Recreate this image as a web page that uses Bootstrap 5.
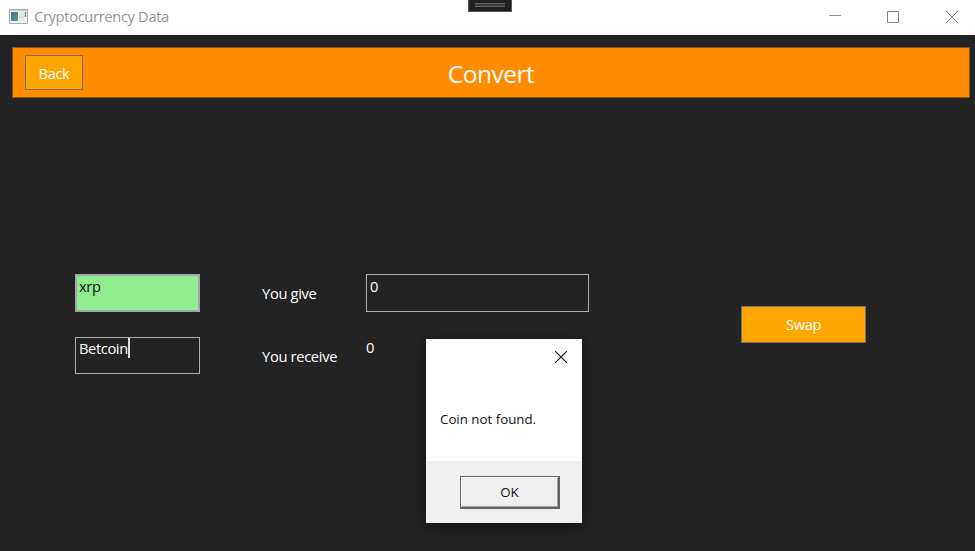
<!DOCTYPE html>
<html lang="en">
<head>
<meta charset="utf-8">
<meta name="viewport" content="width=device-width, initial-scale=1">
<title>Cryptocurrency Data</title>
<link href="https://cdn.jsdelivr.net/npm/bootstrap@5.3.0/dist/css/bootstrap.min.css" rel="stylesheet">
<style>
body { background: #232323; color: #fff; font-family: "Open Sans", "Noto Sans", sans-serif; font-size: 14.7px; line-height: 20px; letter-spacing: -.4px; height: 551px; }
.title-bar { height: 35px; padding: 0 16px 2px 9px; color: #949494; }
.title-text { margin-left: 5px; padding-bottom: 2px; font-size: 14.7px; letter-spacing: -.34px; }
.win-controls { gap: 46px; }
.debug-tab { top: 0; left: 468px; width: 44px; height: 12px; }
.main-area { padding: 12px 5px 0 12px; }
.app-header { height: 51px; background: #ff8c00; border: 1px solid #8b5312; }
.app-header .btn { left: 12px; top: 7px; width: 58px; height: 35px; }
.app-header h1 { font-size: 24.5px; letter-spacing: -.5px; }
.btn-amber, .btn-amber:hover { background: #ffa500; color: #fff; border: 1px solid #707070; }
.app-btn { font-size: inherit; line-height: 20px; letter-spacing: inherit; }
.form-area { padding: 176px 0 0 63px; }
.w-coin { width: 125px; }
.w-label { width: 104px; margin-left: 62px; letter-spacing: -.33px; }
.w-amount { width: 223px; }
.app-input { color: #fff; background: transparent; border: 1px solid #abadb3; padding: 1px 3px; line-height: 20px; }
.give-row { height: 38px; margin-bottom: 25px; }
.receive-row { height: 37px; }
.found { background: #90ee90; color: #111; border: 2px solid #a3a5a8; padding: 0 2px; }
.caret { width: 2px; height: 20px; background: #ddd; }
.swap-btn { width: 125px; height: 37px; margin: 32px 0 0 152px; padding: 0 0 2px; }
.message-box { left: 426px; top: 339px; width: 156px; height: 184px; color: #111; font-size: 13.3px; letter-spacing: 0; box-shadow: 0 3px 12px rgba(0,0,0,.5); }
.message-close { height: 36px; padding: 11px 15px 0 0; }
.message-body { padding: 34px 14px 0; }
.message-footer { height: 62px; background: #efefef; padding: 15px 22px 0 34px; }
.ok-btn { height: 33px; background: #efefef; color: #111; border: 1px solid #646464; border-width: 1px 2px 2px 1px; box-shadow: inset 1px 1px #fff, inset -1px -1px #a0a0a0; }
</style>
<script src="https://cdn.jsdelivr.net/npm/bootstrap@5.3.0/dist/js/bootstrap.bundle.min.js" defer></script>
</head>
<body class="position-relative overflow-hidden">
<header class="title-bar bg-white d-flex align-items-center">
  <svg width="20" height="16" viewBox="0 0 20 16"><defs><linearGradient id="g" x1="0" x2="1" y2="1"><stop stop-color="#426a9c"/><stop offset="1" stop-color="#56a878"/></linearGradient></defs><path fill="#f3f5f5" stroke="#a8abad" d="M.5.5h18v14H.5z"/><path stroke="#c6cbce" d="M1 1.500h17"/><path fill="url(#g)" d="M2 3h7v9H2z"/><path fill="#dfe5e8" d="M10 3h5v9h-5z"/><path stroke="#579e7c" stroke-width="1.500" d="M16.500 3v5"/></svg>
  <span class="title-text">Cryptocurrency Data</span>
  <div class="win-controls d-flex align-items-center ms-auto">
    <svg width="12" height="12" stroke="#929292"><path d="M0 4.500h12"/></svg>
    <svg width="12" height="12" fill="none" stroke="#858585"><path d="M.5.5h11v11H.5z"/></svg>
    <svg width="14" height="12" stroke="#858585"><path d="M1 0l12 12M13 0l-12 12"/></svg>
  </div>
</header>
<svg class="debug-tab position-absolute" viewBox="0 0 44 12"><path fill="#202020" d="M0 0h44v12H0z"/><path fill="none" stroke="#555" d="M.5 0v11.500h43V0"/><path stroke="#666" d="M7 3.500h30M7 6.500h30"/><path stroke="#3b3b3b" stroke-width="2" d="M7 5h30"/></svg>
<main class="main-area">
  <div class="app-header position-relative text-center">
    <button type="button" class="btn btn-amber app-btn rounded-0 p-0 position-absolute">Back</button>
    <h1 class="fw-normal m-0 pt-2 lh-base">Convert</h1>
  </div>
  <div class="form-area d-flex align-items-start">
    <div>
      <div class="give-row d-flex">
        <div class="app-input found w-coin">xrp</div>
        <div class="w-label d-flex align-items-center">You give</div>
        <div class="app-input w-amount">0</div>
      </div>
      <div class="receive-row d-flex">
        <div class="app-input w-coin d-flex pt-0"><span>Betcoin</span><span class="caret"></span></div>
        <div class="w-label d-flex align-items-center">You receive</div>
        <div class="w-amount">0</div>
      </div>
    </div>
    <button type="button" class="swap-btn btn btn-amber app-btn rounded-0">Swap</button>
  </div>
</main>
<section class="message-box position-absolute bg-white d-flex flex-column" role="dialog" aria-label="Message">
  <div class="message-close text-end lh-1"><svg width="12" height="12" stroke="#111" stroke-width="1.100"><path d="M0 0l12 12M12 0L0 12"/></svg></div>
  <div class="message-body flex-grow-1">Coin not found.</div>
  <div class="message-footer"><button type="button" class="ok-btn btn app-btn rounded-0 p-0 w-100">OK</button></div>
</section>
</body>
</html>
